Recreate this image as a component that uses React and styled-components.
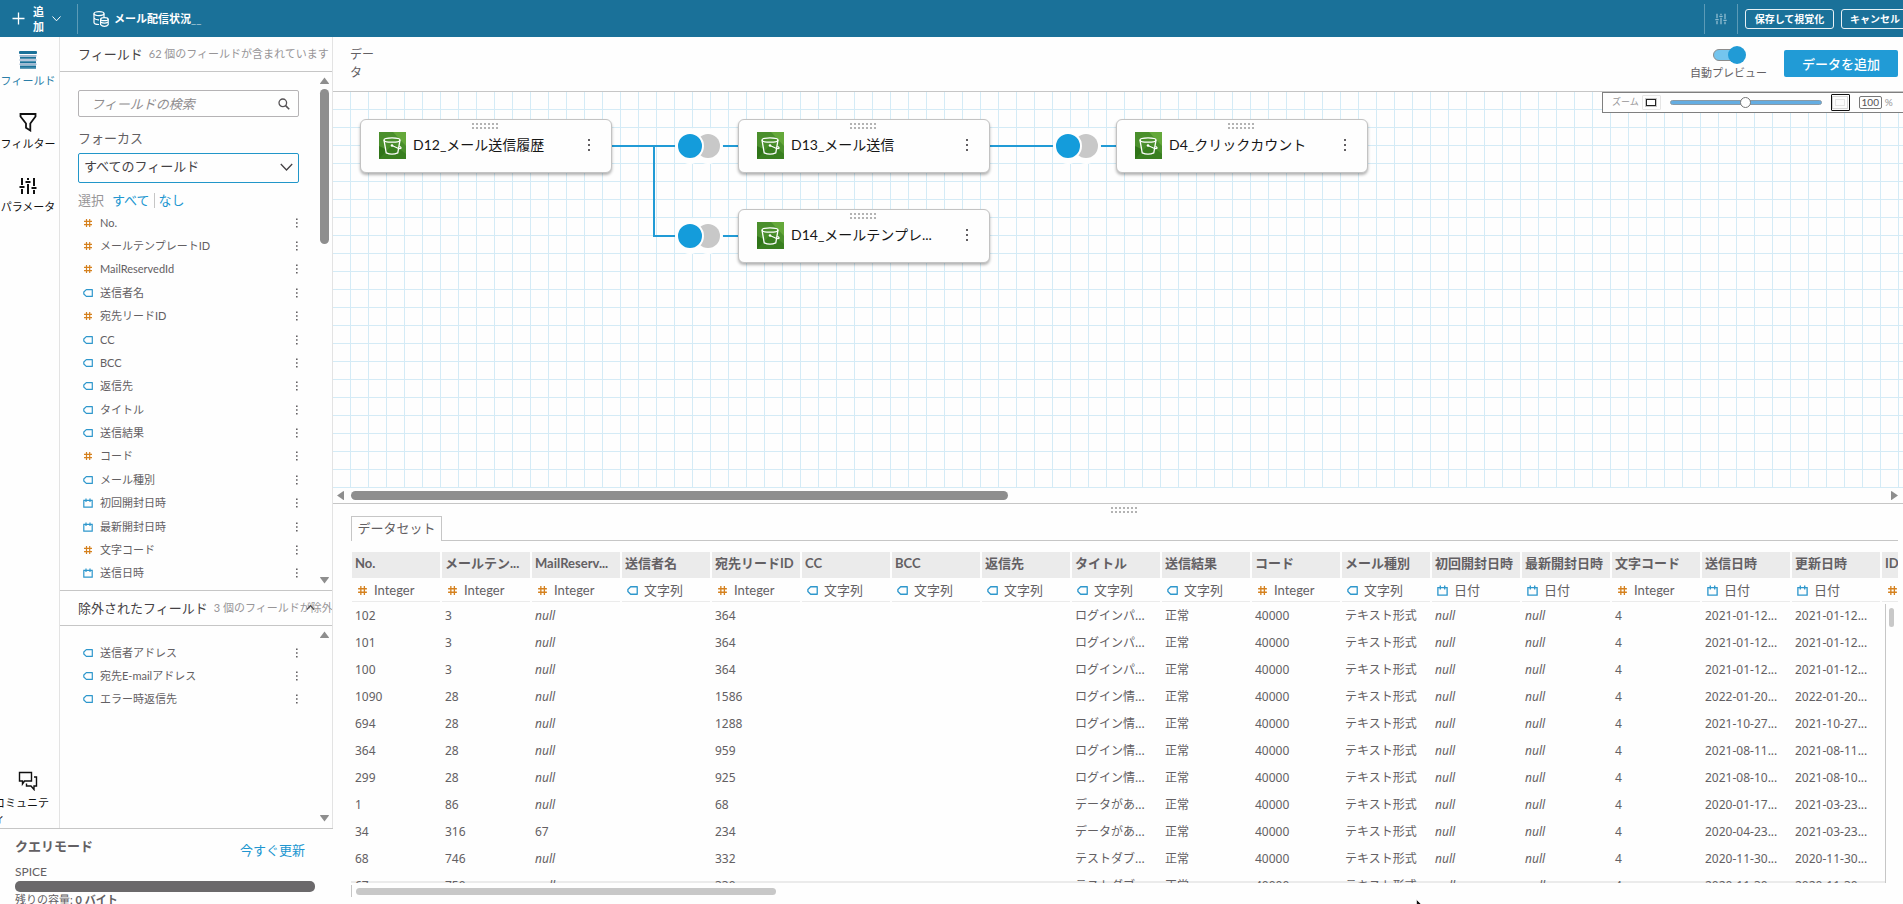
import React, {useState} from 'react';
import styled, {createGlobalStyle} from 'styled-components';

const GlobalStyle = createGlobalStyle`
  * {
    box-sizing: border-box;
  }

  body {
    margin: 0;
    overflow: hidden;
    background-color: #fefefe;
    color: #636063;
    font-family: Lato, "Noto Sans CJK JP", sans-serif;
    font-size: 13px;
  }

  button, input, select {
    font: inherit;
    color: inherit;
    margin: 0;
    padding: 0;
    border: none;
    background: none;
    border-radius: 0;
  }

  button {
    cursor: pointer;
  }

  svg {
    flex-shrink: 0;
  }

  a {
    color: #2196d0;
    text-decoration: none;
  }

  h1, h2, h3, p, ul {
    margin: 0;
    padding: 0;
    font-weight: normal;
  }
`;

// the page is a little wider than the window, the overflow is cut off on the right
const Page = styled.div`
  display: flex;
  flex-direction: column;
  width: calc(100% + 12px);
  height: 100vh;
  overflow: hidden;
`;

const TopBar = styled.header`
  display: flex;
  align-items: center;
  flex-shrink: 0;
  height: 37px;
  padding: 0 6px 0 12px;
  background-color: #1a7199;
  color: #ffffff;
`;
const AddMenuButton = styled.button`
  display: flex;
  align-items: center;
  gap: 8px;
  width: 49px;
  font-size: 11px;
  font-weight: bold;
  line-height: 15px;
`;
const AddMenuLabel = styled.span`
  width: 11px;
`;
const BarDivider = styled.div`
  width: 1px;
  height: 30px;
  margin: 0 ${props => props.$gap} 0 ${props => props.$before || '0px'};
  background-color: #5c9bb7;
`;
const DatasetName = styled.h1`
  margin-left: 5px;
  font-size: 11px;
  font-weight: bold;
  line-height: 16px;
`;
const Underscores = styled.span`
  opacity: 0.5;
`;
const BarActions = styled.div`
  display: flex;
  align-items: center;
  margin-left: auto;
`;
const IconButton = styled.button`
  display: flex;
  align-items: center;
  justify-content: center;
`;
const OutlineButton = styled.button`
  height: 20px;
  margin-left: 7px;
  padding: 0 8px;
  border: 1px solid #e8f1f5;
  border-radius: 3px;
  font-size: 10px;
  font-weight: bold;
  line-height: 16px;
  width: ${props => props.$width};
`;

const Body = styled.div`
  display: flex;
  flex: 1;
  min-height: 0;
`;
const LeftSide = styled.aside`
  display: flex;
  flex-direction: column;
  flex-shrink: 0;
  width: 333px;
`;
const LeftTop = styled.div`
  display: flex;
  flex: 1;
  min-height: 0;
`;

const Rail = styled.nav`
  display: flex;
  flex-direction: column;
  width: 59px;
  padding: 10px 0 1px;
  overflow: hidden;
`;
const RailButton = styled.button`
  display: flex;
  flex-direction: column;
  align-items: center;
  flex-shrink: 0;
  gap: 4px;
  width: 56px;
  margin-bottom: 21px;
  color: ${props => props.$active ? '#2b7ea8' : '#111111'};
  font-size: 11px;
  line-height: 16px;
`;
const RailIcon = styled.span`
  display: flex;
  align-items: flex-end;
  height: 22px;
`;
const CommunityButton = styled(RailButton)`
  margin: auto 0 0;
`;
const CommunityLabel = styled.span`
  width: 56px;
  margin-left: -12px;
  text-align: left;
  line-break: anywhere;
`;

const Panel = styled.div`
  display: flex;
  flex-direction: column;
  flex: 1;
  min-width: 0;
  border-left: 1px solid #e3e3e3;
  border-right: 1px solid #e3e3e3;
`;
const PanelHeader = styled.div`
  display: flex;
  align-items: center;
  flex-shrink: 0;
  position: relative;
  height: ${props => props.$split ? '36px' : '35px'};
  padding-left: 18px;
  border-top: ${props => props.$split ? '1px solid #c6c6c6' : 'none'};
  border-bottom: 1px solid #c6c6c6;
  overflow: hidden;
  white-space: nowrap;
`;
const PanelTitle = styled.h2`
  color: #444144;
  font-size: 13px;
  line-height: 20px;
`;
const PanelCount = styled.span`
  margin-left: 6px;
  color: #979597;
  font-size: 11px;
  line-height: 20px;
`;
const CollapseButton = styled(IconButton)`
  position: absolute;
  right: 17px;
  top: 12px;
  color: #444144;
`;
const PanelSection = styled.section`
  display: flex;
  flex: 1;
  min-height: 0;
`;
const ExcludedSection = styled(PanelSection)`
  flex: none;
  height: 202px;
`;
const PanelContent = styled.div`
  display: flex;
  flex-direction: column;
  flex: 1;
  padding: ${props => props.$short ? '15px' : '18px'} 20px 5px 18px;
`;
const SearchBox = styled.label`
  display: flex;
  align-items: center;
  height: 27px;
  padding: 0 8px 0 12px;
  border: 1px solid #b5b3b5;
  border-radius: 2px;
`;
const SearchInput = styled.input`
  flex: 1;
  min-width: 0;
  height: 20px;
  outline: none;
  font-size: 13px;

  &::placeholder {
    color: #8f8d8f;
    font-style: italic;
    opacity: 1;
  }
`;
const FocusLabel = styled.label`
  margin: 11px 0 5px;
  font-size: 13px;
  line-height: 20px;
`;
const SelectBox = styled.div`
  position: relative;
`;
const FocusSelect = styled.select`
  appearance: none;
  width: 100%;
  height: 30px;
  padding: 0 28px 4px 5px;
  border: 1px solid #2196c9;
  border-radius: 2px;
  color: #444144;
  font-size: 13px;
`;
const SelectChevron = styled.svg`
  position: absolute;
  right: 6px;
  top: 10px;
  pointer-events: none;
`;
const PickRow = styled.div`
  display: flex;
  align-items: center;
  margin: 7px 0 1px;
  font-size: 13px;
  line-height: 20px;
  color: #979597;
`;
const PickLinks = styled.div`
  display: flex;
  margin-left: 4px;
`;
const PickLink = styled.a`
  padding: 0 4px;
  line-height: 15px;

  & + & {
    border-left: 1px solid #c6c6c6;
  }
`;
const FieldList = styled.ul`
  display: flex;
  flex-direction: column;
  flex: ${props => props.$fill ? 1 : 'none'};
  min-height: 0;
  list-style: none;
`;
const FieldItem = styled.li`
  display: flex;
  align-items: center;
  flex: 1;
  min-height: 23px;
  padding-left: 5px;
  font-size: 11px;
  line-height: 16px;
`;
const FieldName = styled.span`
  flex: 1;
  margin-left: 7px;
`;

const VScroll = styled.div`
  display: flex;
  flex-direction: column;
  align-items: center;
  width: 13px;
  padding: 5px 2px 6px 0;
  gap: 5px;
`;
const VThumb = styled.div`
  width: 9px;
  height: 155px;
  border-radius: 5px;
  background-color: #8e8e8e;
`;
const VSpace = styled.div`
  flex: 1;
`;

const QueryMode = styled.footer`
  display: flex;
  flex-direction: column;
  flex-shrink: 0;
  height: 76px;
  padding: 7px 18px 0 15px;
  border-top: 1px solid #c6c6c6;
`;
const QueryRow = styled.div`
  display: flex;
  justify-content: space-between;
  padding-right: 10px;
  font-size: 13px;
`;
const QueryTitle = styled.h3`
  font-size: 13px;
  font-weight: bold;
  line-height: 20px;
`;
const RefreshLink = styled.a`
  line-height: 28px;
`;
const SpiceName = styled.p`
  font-size: 12px;
  line-height: 16px;
`;
const CapacityBar = styled.div`
  flex-shrink: 0;
  height: 11px;
  margin-top: 1px;
  border-radius: 5px;
  background-color: #6b696b;
`;
const CapacityText = styled.p`
  font-size: 11px;
  line-height: 15px;
`;

const Main = styled.main`
  display: flex;
  flex-direction: column;
  flex: 1;
  min-width: 0;
`;
const DataHeader = styled.div`
  display: flex;
  align-items: center;
  flex-shrink: 0;
  height: 55px;
  padding: 0 17px 1px;
  border-bottom: 1px solid #c6c6c6;
`;
const DataTitle = styled.h2`
  width: 26px;
  font-size: 12px;
  line-height: 18px;
`;
const PreviewToggle = styled.label`
  display: flex;
  flex-direction: column;
  align-items: center;
  gap: 1px;
  margin-left: auto;
  font-size: 11px;
  line-height: 16px;
`;
const ToggleInput = styled.input`
  appearance: none;
  display: flex;
  align-items: center;
  justify-content: flex-end;
  width: 32px;
  height: 12px;
  margin: 3px 0;
  border: 1px solid #8c8c8c;
  border-radius: 6px;
  background-color: #74c5ee;

  &::before {
    content: '';
    flex-shrink: 0;
    width: 18px;
    height: 18px;
    margin-right: -2px;
    border-radius: 50%;
    background-color: #219bd6;
  }

  &:not(:checked) {
    justify-content: flex-start;
    background-color: #dddddd;
  }
`;
const AddDataButton = styled.button`
  width: 114px;
  height: 27px;
  margin-left: 17px;
  border-radius: 2px;
  background-color: #219bd6;
  color: #ffffff;
  font-size: 13px;
  font-weight: 500;
  line-height: 20px;
`;

const Canvas = styled.section`
  position: relative;
  flex: 1;
  min-height: 0;
  overflow: hidden;
  background-image: linear-gradient(to right, transparent 17px, #d4ebf6 17px),
    linear-gradient(to bottom, transparent 17px, #d4ebf6 17px);
  background-size: 18px 18px;
`;
const Wires = styled.svg`
  position: absolute;
  left: 0;
  top: 0;
`;
const Node = styled.div`
  position: absolute;
  left: ${props => props.$x}px;
  top: ${props => props.$y}px;
  display: flex;
  align-items: center;
  width: 252px;
  height: 54px;
  padding: 0 20px 2px 18px;
  border: 1px solid #c3c3c3;
  border-radius: 6px;
  background-color: #fefefe;
  box-shadow: 0 2px 3px rgba(0, 0, 0, 0.3);
`;
const NodeName = styled.span`
  flex: 1;
  margin-left: 7px;
  color: #161616;
  font-size: 14px;
  line-height: 20px;
  white-space: nowrap;
`;
const Grip = styled.div`
  width: 28px;
  height: 6px;
  background-image: linear-gradient(to right, transparent 2px, #fefefe 2px),
    linear-gradient(to bottom, #b3b3b3 2px, #fefefe 2px);
  background-size: 4px 4px;
`;
const NodeGrip = styled(Grip)`
  position: absolute;
  left: 111px;
  top: 3px;
`;

const ZoomBar = styled.div`
  position: absolute;
  right: 0;
  top: 0;
  display: flex;
  align-items: center;
  width: 313px;
  height: 21px;
  padding: 0 0 1px 9px;
  border: 1px solid #7f7f7f;
  background-color: #fefefe;
  color: #979597;
  font-size: 10px;
  line-height: 14px;
`;
const ZoomLabel = styled.label`
  margin-right: 3px;
  font-size: 9px;
`;
const ZoomPreset = styled.button`
  display: flex;
  align-items: center;
  justify-content: center;
  width: 19px;
  height: ${props => props.$large ? '17px' : '15px'};
  border: 1px solid ${props => props.$large ? '#111111' : '#e6e6e6'};
  border-radius: 1px;

  &::before {
    content: '';
    box-sizing: border-box;
    width: 10px;
    height: 7px;
    border: 1px solid ${props => props.$large ? '#e6e6e6' : '#222222'};
    outline: 1px solid ${props => props.$large ? '#d6d6d6' : '#c6c6c6'};
    outline-offset: ${props => props.$large ? '2px' : '0'};
  }
`;
const ZoomSlider = styled.input`
  appearance: none;
  width: 152px;
  height: 11px;
  margin: 0 9px;

  &::-webkit-slider-runnable-track {
    height: 5px;
    border: 1px solid #8a9aa6;
    border-radius: 3px;
    background-color: #64ade2;
  }

  &::-webkit-slider-thumb {
    appearance: none;
    width: 11px;
    height: 11px;
    margin-top: -4px;
    border: 1px solid #777777;
    border-radius: 50%;
    background-color: #ffffff;
  }
`;
const ZoomInput = styled.input`
  width: 23px;
  height: 13px;
  margin: 0 3px 0 9px;
  border: 1px solid #777777;
  border-radius: 2px;
  color: #555255;
  font-size: 10px;
  text-align: center;
`;

const CanvasScroll = styled.div`
  display: flex;
  align-items: center;
  justify-content: space-between;
  flex-shrink: 0;
  height: 16px;
  padding: 0 17px 0 4px;
  border-bottom: 1px solid #c6c6c6;
`;
const CanvasThumb = styled.div`
  width: 657px;
  height: 9px;
  margin: 0 auto 0 7px;
  border-radius: 5px;
  background-color: #8e8e8e;
`;

const Preview = styled.section`
  display: flex;
  flex-direction: column;
  flex-shrink: 0;
  height: 400px;
`;
const GripRow = styled.div`
  display: flex;
  justify-content: center;
  height: 12px;
  padding: 3px 0 0 2px;
`;
const Tabs = styled.div`
  display: flex;
  height: 25px;
  margin: 0 17px 0 18px;
`;
const Tab = styled.button`
  width: 91px;
  padding-bottom: 2px;
  border: 1px solid #c6c6c6;
  border-bottom: none;
  font-size: 13px;
  line-height: 20px;
`;
const TabsRest = styled.div`
  flex: 1;
  border-bottom: 1px solid #c6c6c6;
`;
const TableWrap = styled.div`
  position: relative;
  flex: 1;
  min-height: 0;
  margin: 11px 17px 0 18px;
  padding-left: 1px;
  overflow: hidden;
  box-shadow: inset 0 -2px #ebebeb;
`;
const Table = styled.table`
  width: 1620px;
  table-layout: fixed;
  border-collapse: separate;
  border-spacing: 0;
  white-space: nowrap;
  text-align: left;
`;
const HeadCell = styled.th`
  height: 26px;
  padding: 0 0 4px 3px;
  border-right: 2px solid #fefefe;
  background-color: #ebebeb;
  font-size: 13px;
  font-weight: bold;
  line-height: 20px;
`;
const TypeCell = styled.td`
  height: 24px;
  padding: 0;
  border-right: 2px solid #fefefe;
  background-image: linear-gradient(#ebebeb, #ebebeb);
  background-size: 88px 1px;
  background-position: 0 23px;
  background-repeat: no-repeat;
  font-size: 13px;
`;
const TypeInner = styled.div`
  display: flex;
  align-items: center;
  gap: 6px;
  padding-left: 5px;
  line-height: 20px;
`;
const Cell = styled.td`
  height: 27px;
  padding: 0 6px 0 3px;
  font-family: "Noto Sans", "Noto Sans CJK JP", sans-serif;
  font-size: 12px;
  line-height: 18px;
  font-style: ${props => props.$empty ? 'italic' : 'normal'};
`;
const TableScroll = styled.div`
  position: absolute;
  right: 0;
  top: 52px;
  bottom: 0;
  width: 13px;
  padding: 4px 4px 0 3px;
  border-left: 1px solid #c6c6c6;
  background-color: #fefefe;
`;
const TableThumb = styled.div`
  width: 5px;
  height: 19px;
  border-radius: 3px;
  background-color: #c8c8c8;
`;
const BottomScroll = styled.div`
  display: flex;
  align-items: center;
  height: 12px;
  margin: 2px 17px 7px 18px;
  padding-left: 4px;
  border-left: 1px solid #c6c6c6;
`;
const BottomThumb = styled.div`
  width: 420px;
  height: 7px;
  border-radius: 4px;
  background-color: #c8c8c8;
`;
const Pointer = styled.svg`
  position: fixed;
  left: 1416px;
  bottom: -12px;
`;

const fields = [
    ['int', 'No.'],
    ['int', 'メールテンプレートID'],
    ['int', 'MailReservedId'],
    ['str', '送信者名'],
    ['int', '宛先リードID'],
    ['str', 'CC'],
    ['str', 'BCC'],
    ['str', '返信先'],
    ['str', 'タイトル'],
    ['str', '送信結果'],
    ['int', 'コード'],
    ['str', 'メール種別'],
    ['date', '初回開封日時'],
    ['date', '最新開封日時'],
    ['int', '文字コード'],
    ['date', '送信日時'],
];

const excludedFields = [
    ['str', '送信者アドレス'],
    ['str', '宛先E-mailアドレス'],
    ['str', 'エラー時返信先'],
];

const columns = [
    ['int', 'No.'],
    ['int', 'メールテン...'],
    ['int', 'MailReserv...'],
    ['str', '送信者名'],
    ['int', '宛先リードID'],
    ['str', 'CC'],
    ['str', 'BCC'],
    ['str', '返信先'],
    ['str', 'タイトル'],
    ['str', '送信結果'],
    ['int', 'コード'],
    ['str', 'メール種別'],
    ['date', '初回開封日時'],
    ['date', '最新開封日時'],
    ['int', '文字コード'],
    ['date', '送信日時'],
    ['date', '更新日時'],
    ['int', 'ID'],
];

const typeNames = {int: 'Integer', str: '文字列', date: '日付'};

// no, template, reserved, lead, title, sent, updated
const mails = [
    ['102', '3', null, '364', 'ログインパ...', '2021-01-12...', '2021-01-12...'],
    ['101', '3', null, '364', 'ログインパ...', '2021-01-12...', '2021-01-12...'],
    ['100', '3', null, '364', 'ログインパ...', '2021-01-12...', '2021-01-12...'],
    ['1090', '28', null, '1586', 'ログイン情...', '2022-01-20...', '2022-01-20...'],
    ['694', '28', null, '1288', 'ログイン情...', '2021-10-27...', '2021-10-27...'],
    ['364', '28', null, '959', 'ログイン情...', '2021-08-11...', '2021-08-11...'],
    ['299', '28', null, '925', 'ログイン情...', '2021-08-10...', '2021-08-10...'],
    ['1', '86', null, '68', 'データがあ...', '2020-01-17...', '2021-03-23...'],
    ['34', '316', '67', '234', 'データがあ...', '2020-04-23...', '2021-03-23...'],
    ['68', '746', null, '332', 'テストダブ...', '2020-11-30...', '2020-11-30...'],
    ['67', '750', null, '330', 'テストダブ...', '2020-11-30...', '2020-11-30...'],
];

const toCells = ([no, template, reserved, lead, title, sent, updated]) => [
    no, template, reserved, '', lead, '', '', '', title, '正常', '40000',
    'テキスト形式', null, null, '4', sent, updated, '',
];

const nodes = [
    {name: 'D12_メール送信履歴', x: 27, y: 27},
    {name: 'D13_メール送信', x: 405, y: 27},
    {name: 'D4_クリックカウント', x: 783, y: 27},
    {name: 'D14_メールテンプレ...', x: 405, y: 117},
];

const joins = [[357, 54], [735, 54], [357, 144]];

function TypeIcon({type, size = 10}) {
    if (type === 'int') {
        return (
            <svg width={size} height={size} viewBox="0 0 10 10" stroke="#d5811e" strokeWidth="1.2" fill="none">
                <path d="M3.5 1v8M6.7 1v8M1 3.4h8M1 6.6h8"/>
            </svg>
        );
    }
    if (type === 'str') {
        return (
            <svg width={size} height={size} viewBox="0 0 10 10" stroke="#2e97cc" strokeWidth="1.2" fill="none">
                <path d="M3.3 1.6H9.3V8.4H3.3L0.8 6V4Z" strokeLinejoin="round"/>
            </svg>
        );
    }
    return (
        <svg width={size} height={size} viewBox="0 0 10 10" stroke="#2e97cc" strokeWidth="1.2" fill="none">
            <path d="M0.8 2.4H9.2V9.2H0.8ZM3 0.5V4M7 0.5V4"/>
        </svg>
    );
}

function Kebab() {
    return (
        <svg width="4" height="14" viewBox="0 0 4 14" fill="#636063">
            <path d="M1 1h2v2H1zM1 6h2v2H1zM1 11h2v2H1z"/>
        </svg>
    );
}

function SmallKebab() {
    return (
        <svg width="4" height="10" viewBox="0 0 4 10" fill="#636063">
            <path d="M1 0.5h1.6v1.6H1zM1 4.2h1.6v1.6H1zM1 7.9h1.6v1.6H1z"/>
        </svg>
    );
}

function Arrow({dir}) {
    const shapes = {
        up: 'M4.5 0.5L9 6.5Q9 7 8.5 7H0.5Q0 7 0 6.5Z',
        down: 'M4.5 6.5L9 0.5Q9 0 8.5 0H0.5Q0 0 0 0.5Z',
        left: 'M0 4.5L6.5 0Q7 0 7 0.5V8.5Q7 9 6.5 9Z',
        right: 'M7 4.5L0.5 0Q0 0 0 0.5V8.5Q0 9 0.5 9Z',
    };
    const flat = dir === 'up' || dir === 'down';
    return (
        <svg width={flat ? 9 : 7} height={flat ? 7 : 9} fill="#8e8e8e">
            <path d={shapes[dir]}/>
        </svg>
    );
}

function SlidersIcon({size, color}) {
    return (
        <svg width={size} height={size} viewBox="0 0 18 18" stroke={color} strokeWidth="2" fill="none">
            <path d="M3 1v7M3 12v5M9 1v2M9 7v10M15 1v8M15 13v4M0.5 10h5M6.5 5h5M12.5 11h5"/>
        </svg>
    );
}

function BucketIcon() {
    return (
        <svg width="27" height="27" viewBox="0 0 27 27" fill="none">
            <rect width="27" height="27" fill="#4a8f2c"/>
            <path d="M0 27V14L27 27Z" fill="#2f7418"/>
            <path d="M27 0V14L14 0Z" fill="#64a83a"/>
            <path d="M0 27L14 12L27 22V27Z" fill="#397f20"/>
            <ellipse cx="13" cy="8" rx="8" ry="2.2" stroke="#ffffff" strokeWidth="1.3"/>
            <path d="M5 8.2L7.2 20.8Q13 23.6 18.8 20.8L21 8.2" stroke="#ffffff" strokeWidth="1.3"/>
            <path d="M13 13.5L19.5 16.5Q22.5 17 22 15.6L20.5 14.3" stroke="#ffffff" strokeWidth="1.2"/>
            <circle cx="13" cy="13.5" r="1.3" fill="#ffffff"/>
        </svg>
    );
}

function FieldRows({items, fill}) {
    return (
        <FieldList $fill={fill}>
            {items.map(([type, name]) => (
                <FieldItem key={name}>
                    <TypeIcon type={type}/>
                    <FieldName>{name}</FieldName>
                    <IconButton aria-label="メニュー"><SmallKebab/></IconButton>
                </FieldItem>
            ))}
        </FieldList>
    );
}

function Header() {
    return (
        <TopBar>
            <AddMenuButton>
                <svg width="13" height="13" stroke="#ffffff" strokeWidth="1.3"><path d="M6.5 0.5v12M0.5 6.5h12"/></svg>
                <AddMenuLabel>追加</AddMenuLabel>
                <svg width="9" height="6" stroke="#ffffff" fill="none"><path d="M0.5 0.5L4.5 4.8L8.5 0.5"/></svg>
            </AddMenuButton>
            <BarDivider $before="16px" $gap="15px"/>
            <svg width="16" height="16" viewBox="0 0 16 16" fill="none" stroke="#ffffff" strokeWidth="1.2">
                <ellipse cx="6" cy="2.6" rx="5" ry="2"/>
                <path d="M1 2.6V11.5Q1 13.4 6 13.5M11 2.6V6M1 7Q2.5 9 6 8.8"/>
                <ellipse cx="11.4" cy="8.2" rx="3.8" ry="1.5"/>
                <path d="M7.6 8.2V13.6Q9 15.3 11.4 15.3Q14.2 15.2 15.2 13.6V8.2M7.6 11Q11.4 13.4 15.2 11"/>
            </svg>
            <DatasetName>メール配信状況<Underscores>__</Underscores></DatasetName>
            <BarActions>
                <BarDivider $gap="10px"/>
                <IconButton aria-label="設定"><SlidersIcon size={12} color="#8fbcd0"/></IconButton>
                <BarDivider $before="10px" $gap="0px"/>
                <OutlineButton $width="89px">保存して視覚化</OutlineButton>
                <OutlineButton $width="68px">キャンセル</OutlineButton>
            </BarActions>
        </TopBar>
    );
}

function SideRail() {
    return (
        <Rail>
            <RailButton $active>
                <RailIcon>
                    <svg width="18" height="20" viewBox="0 0 18 20">
                        <rect y="2" width="18" height="3" rx="1" fill="#1a7199"/>
                        <path d="M0.5 6.8h17M0.5 11h17M0.5 15.2h17" stroke="#9db4cf" strokeWidth="1.6"/>
                        <path d="M1 8.8h16M1 13.2h16M1 17.4h16" stroke="#1a7199" strokeWidth="2"/>
                        <path d="M1 19h16" stroke="#1a7199" strokeWidth="1.4"/>
                    </svg>
                </RailIcon>
                フィールド
            </RailButton>
            <RailButton>
                <RailIcon>
                    <svg width="18" height="20" viewBox="0 0 18 20" fill="none" stroke="#111111" strokeWidth="1.8">
                        <path d="M1.5 2H16.5V4.5L11.3 11.5V18.5L7 15.8V11.5L1.5 4.5Z"/>
                    </svg>
                </RailIcon>
                フィルター
            </RailButton>
            <RailButton>
                <RailIcon><SlidersIcon size={18} color="#111111"/></RailIcon>
                パラメータ
            </RailButton>
            <CommunityButton>
                <RailIcon>
                    <svg width="20" height="20" viewBox="0 0 20 20" fill="none" stroke="#111111" strokeWidth="1.4">
                        <path d="M1.5 1.5H13.5V10H6.5L4.5 13V10H1.5Z"/>
                        <path d="M16 6H18.5V15H16V18.5L13 15H8.5V12.5"/>
                    </svg>
                </RailIcon>
                <CommunityLabel>コミュニティ</CommunityLabel>
            </CommunityButton>
        </Rail>
    );
}

function FieldsPanel() {
    return (
        <Panel>
            <PanelHeader>
                <PanelTitle>フィールド</PanelTitle>
                <PanelCount>62 個のフィールドが含まれています</PanelCount>
            </PanelHeader>
            <PanelSection>
                <PanelContent>
                    <SearchBox>
                        <SearchInput type="text" placeholder="フィールドの検索" aria-label="フィールドの検索"/>
                        <svg width="12" height="12" viewBox="0 0 12 12" fill="none" stroke="#555255" strokeWidth="1.3">
                            <circle cx="4.8" cy="4.8" r="3.8"/>
                            <path d="M7.6 7.6L11.2 11.2" strokeWidth="1.6"/>
                        </svg>
                    </SearchBox>
                    <FocusLabel htmlFor="focus">フォーカス</FocusLabel>
                    <SelectBox>
                        <FocusSelect id="focus">
                            <option>すべてのフィールド</option>
                        </FocusSelect>
                        <SelectChevron width="13" height="9" fill="none" stroke="#444144" strokeWidth="1.3">
                            <path d="M0.8 1L6.5 7L12.2 1"/>
                        </SelectChevron>
                    </SelectBox>
                    <PickRow>
                        選択
                        <PickLinks>
                            <PickLink href="#all">すべて</PickLink>
                            <PickLink href="#none">なし</PickLink>
                        </PickLinks>
                    </PickRow>
                    <FieldRows items={fields} fill/>
                </PanelContent>
                <VScroll>
                    <Arrow dir="up"/>
                    <VThumb/>
                    <VSpace/>
                    <Arrow dir="down"/>
                </VScroll>
            </PanelSection>
            <PanelHeader $split>
                <PanelTitle>除外されたフィールド</PanelTitle>
                <PanelCount>3 個のフィールドが除外されています</PanelCount>
                <CollapseButton aria-label="折りたたむ">
                    <svg width="9" height="9" fill="none" stroke="#555255" strokeWidth="1.3"><path d="M1 6.5L4.5 2.5L8 6.5"/></svg>
                </CollapseButton>
            </PanelHeader>
            <ExcludedSection>
                <PanelContent $short>
                    <FieldRows items={excludedFields}/>
                </PanelContent>
                <VScroll>
                    <Arrow dir="up"/>
                    <VSpace/>
                    <Arrow dir="down"/>
                </VScroll>
            </ExcludedSection>
        </Panel>
    );
}

function DiagramCanvas() {
    const [zoom, setZoom] = useState(100);

    return (
        <Canvas>
            <Wires width="1200" height="390" fill="none">
                <path d="M279 54H783M321 54V144H405" stroke="#219bd6" strokeWidth="2"/>
                {joins.map(([x, y]) => (
                    <g key={`${x}-${y}`}>
                        <ellipse cx={x} cy={y} rx="15" ry="18" fill="#fefefe"/>
                        <ellipse cx={x + 18} cy={y} rx="15" ry="18" fill="#fefefe"/>
                        <circle cx={x + 18} cy={y} r="12" fill="#c8c8c8"/>
                        <circle cx={x} cy={y} r="13" fill="#149cdb" stroke="#fefefe" strokeWidth="2"/>
                    </g>
                ))}
            </Wires>
            {nodes.map((node) => (
                <Node key={node.name} $x={node.x} $y={node.y}>
                    <NodeGrip/>
                    <BucketIcon/>
                    <NodeName>{node.name}</NodeName>
                    <IconButton aria-label="メニュー"><Kebab/></IconButton>
                </Node>
            ))}
            <ZoomBar>
                <ZoomLabel htmlFor="zoom">ズーム</ZoomLabel>
                <ZoomPreset aria-label="縮小"/>
                <ZoomSlider id="zoom" type="range" min="0" max="200" value={zoom}
                            onChange={(e) => setZoom(Number(e.target.value))}/>
                <ZoomPreset $large aria-label="拡大"/>
                <ZoomInput aria-label="ズーム率" value={zoom} onChange={(e) => setZoom(Number(e.target.value))}/>
                %
            </ZoomBar>
        </Canvas>
    );
}

function DataPreview() {
    return (
        <Preview>
            <GripRow><Grip/></GripRow>
            <Tabs>
                <Tab>データセット</Tab>
                <TabsRest/>
            </Tabs>
            <TableWrap>
                <Table>
                    <thead>
                        <tr>
                            {columns.map(([, name]) => <HeadCell key={name}>{name}</HeadCell>)}
                        </tr>
                        <tr>
                            {columns.map(([type, name]) => (
                                <TypeCell key={name}>
                                    <TypeInner>
                                        <TypeIcon type={type} size={11}/>
                                        {name === 'ID' ? '' : typeNames[type]}
                                    </TypeInner>
                                </TypeCell>
                            ))}
                        </tr>
                    </thead>
                    <tbody>
                        {mails.map((mail) => (
                            <tr key={mail[0]}>
                                {toCells(mail).map((value, index) => (
                                    <Cell key={index} $empty={value === null}>{value === null ? 'null' : value}</Cell>
                                ))}
                            </tr>
                        ))}
                    </tbody>
                </Table>
                <TableScroll><TableThumb/></TableScroll>
            </TableWrap>
            <BottomScroll><BottomThumb/></BottomScroll>
        </Preview>
    );
}

export default function App() {
    const [autoPreview, setAutoPreview] = useState(true);

    return (
        <>
            <GlobalStyle/>
            <Page>
                <Header/>
                <Body>
                    <LeftSide>
                        <LeftTop>
                            <SideRail/>
                            <FieldsPanel/>
                        </LeftTop>
                        <QueryMode>
                            <QueryRow>
                                <QueryTitle>クエリモード</QueryTitle>
                                <RefreshLink href="#refresh">今すぐ更新</RefreshLink>
                            </QueryRow>
                            <SpiceName>SPICE</SpiceName>
                            <CapacityBar/>
                            <CapacityText>残りの容量: <b>0 バイト</b></CapacityText>
                        </QueryMode>
                    </LeftSide>
                    <Main>
                        <DataHeader>
                            <DataTitle>データ</DataTitle>
                            <PreviewToggle>
                                <ToggleInput type="checkbox" checked={autoPreview}
                                             onChange={(e) => setAutoPreview(e.target.checked)}/>
                                自動プレビュー
                            </PreviewToggle>
                            <AddDataButton>データを追加</AddDataButton>
                        </DataHeader>
                        <DiagramCanvas/>
                        <CanvasScroll>
                            <Arrow dir="left"/>
                            <CanvasThumb/>
                            <Arrow dir="right"/>
                        </CanvasScroll>
                        <DataPreview/>
                    </Main>
                </Body>
                <Pointer width="12" height="17" viewBox="0 0 12 17">
                    <path d="M0.5 0.5V14L3.8 11L6 16L8 15L6 10.5H10.5Z" fill="#111111" stroke="#ffffff" strokeWidth="0.6"/>
                </Pointer>
            </Page>
        </>
    );
}
